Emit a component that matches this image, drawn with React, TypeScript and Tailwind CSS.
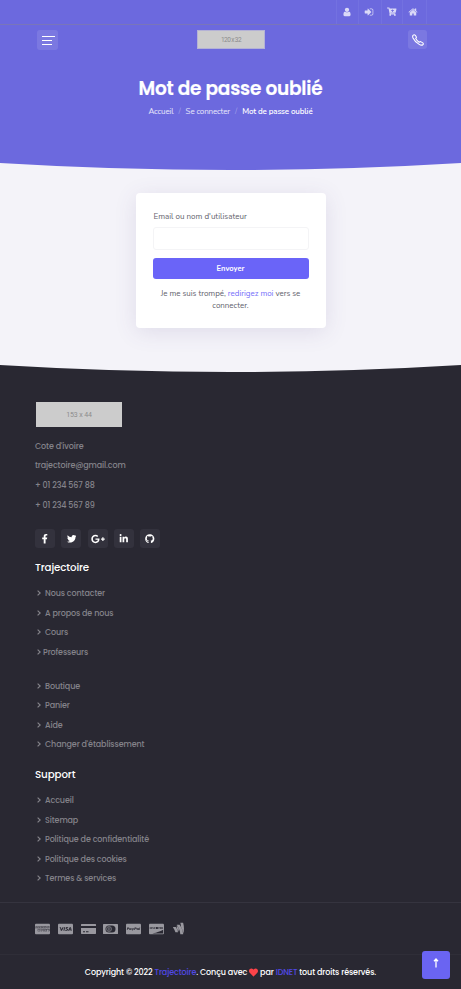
import React from "react";
import {
  FaCartPlus, FaFacebookF, FaTwitter, FaLinkedinIn, FaGithub,
  FaCcAmex, FaCcVisa, FaCcPaypal, FaCcDiscover, FaGoogleWallet, FaHeart, FaGooglePlusG,
} from "react-icons/fa";

const display = "font-['Poppins','Inter',sans-serif]";
const body = "font-['Nunito','Open_Sans',sans-serif]";

function Glyph({ d }: { d: string }) {
  return (
    <svg viewBox="0 0 1792 1792" className="h-[10px] w-[10px]" fill="currentColor">
      <path d={d} />
    </svg>
  );
}

const USER =
  "M1536 1399q0 109-62.5 187t-150.5 78h-854q-88 0-150.5-78t-62.5-187q0-85 8.5-160.5t31.5-152 58.5-131 94-89 134.5-34.5q131 128 313 128t313-128q76 0 134.5 34.5t94 89 58.5 131 31.5 152 8.5 160.5zm-256-887q0 159-112.5 271.5t-271.5 112.5-271.5-112.5-112.5-271.5 112.5-271.5 271.5-112.5 271.5 112.5 112.5 271.5z";
const SIGN_IN =
  "M1312 896q0 26-19 45l-544 544q-19 19-45 19t-45-19-19-45v-288h-448q-26 0-45-19t-19-45v-384q0-26 19-45t45-19h448v-288q0-26 19-45t45-19 45 19l544 544q19 19 19 45zm352-352v704q0 119-84.5 203.5t-203.5 84.5h-320q-32 0-32-32v-64q0-32 32-32h320q66 0 113-47t47-113v-704q0-66-47-113t-113-47h-320q-32 0-32-32v-64q0-32 32-32h320q119 0 203.5 84.5t84.5 203.5z";
const HOME =
  "M1472 992v480q0 26-19 45t-45 19h-384v-384h-256v384h-384q-26 0-45-19t-19-45v-480q0-1 .5-3t.5-3l575-474 575 474q1 2 1 6zm223-69l-62 74q-8 9-21 11h-3q-13 0-21-7l-692-577-692 577q-12 8-24 7-13-2-21-11l-62-74q-8-10-7-23.5t11-21.5l719-599q32-26 76-26t76 26l244 204v-195q0-14 9-23t23-9h192q14 0 23 9t9 23v408l219 182q10 8 11 21.5t-7 23.5z";

function TopBar() {
  const cell = "flex h-full items-center justify-center border-r border-white/5";
  return (
    <div className="flex h-6 justify-end pr-[34px] text-white/75">
      <a className={`${cell} w-[23px] border-l pr-[2px]`}><Glyph d={USER} /></a>
      <a className={`${cell} w-[23px] pr-[2px]`}><Glyph d={SIGN_IN} /></a>
      <a className={`${cell} w-[21px]`}><FaCartPlus className="text-[9.5px]" /></a>
      <a className={`${cell} w-[24px] pr-[3px]`}><Glyph d={HOME} /></a>
    </div>
  );
}

function NavBar() {
  return (
    <div className="flex h-[30px] items-start justify-between border-t border-[#7975b9] pl-[37px] pr-[34px] pt-[5px]">
      <button className="flex h-5 w-[21px] flex-col justify-center gap-[3px] rounded-[3px] bg-white/10 pl-[5px]">
        <span className="h-px w-[13px] bg-white" />
        <span className="h-px w-[10px] bg-white" />
        <span className="h-px w-[10px] bg-white" />
      </button>
      <div className="mr-1 flex h-[19px] w-[68px] items-center justify-center border border-[#b4b2d6] bg-[#cccccc] pt-[2px] font-['Roboto',sans-serif] text-[6.5px] tracking-[-0.6px] text-[#8c8c8c]">
        120 x 32
      </div>
      <button className="flex h-[19px] w-[19px] items-center justify-center rounded-[3px] bg-white/10">
        <svg viewBox="0 0 12 12" className="h-3 w-3" fill="none" stroke="white" strokeWidth="1.1" strokeLinejoin="round">
          <path d="M1 1.300Q2.300.2 3.300 1.300L4.500 3.200 3.700 4.500Q5 6.800 7.200 8.300L8.600 7.600 10.800 8.900Q11.900 9.900 10.700 10.900 9.200 11.600 7.200 10.400 3 8 1 4Q.3 2.300 1 1.300Z" />
        </svg>
      </button>
    </div>
  );
}

function Hero() {
  return (
    <header className="h-[163px] bg-[#6c69de]">
      <TopBar />
      <NavBar />
      <h1 className={`${display} pt-[23px] text-center text-[18.5px] font-semibold leading-6 tracking-[-0.2px] text-white [-webkit-text-stroke:0.2px_white]`}>
        Mot de passe oublié
      </h1>
      <nav className={`${body} mt-[5px] flex justify-center gap-[5px] text-[8px] leading-3 tracking-[-0.15px] text-white/85`}>
        <span>Accueil</span>
        <span className="text-white/40">/</span>
        <span>Se connecter</span>
        <span className="text-white/40">/</span>
        <span className="font-semibold text-white">Mot de passe oublié</span>
      </nav>
    </header>
  );
}

function Curve({ fill }: { fill: string }) {
  return (
    <svg className="block h-[7px] w-full" viewBox="0 0 461 7" preserveAspectRatio="none">
      <path d="M0 0Q230.5 14 461 0Z" fill={fill} />
    </svg>
  );
}

function LoginCard() {
  return (
    <form className={`${body} mx-auto mt-[23px] h-[135px] w-[190px] rounded-[4px] bg-white px-[17px] pt-[18px] text-[8px] text-[#625f6c] shadow-[0_4px_22px_rgba(82,72,130,0.13)]`}>
      <label className="block h-[16px] pl-px leading-3">Email ou nom d'utilisateur</label>
      <input className="block h-[23px] w-full rounded-[3px] border border-[#f4f4f6] bg-white" />
      <button type="button" className="mt-[8px] block h-[21px] w-full rounded-[3px] bg-[#6a64f8] text-[7.5px] font-bold text-white">
        Envoyer
      </button>
      <p className="mt-[9px] text-center leading-3 tracking-[-0.04px]">
        Je me suis trompé, <a className="text-[#766ffa]">redirigez moi</a> vers se<br />connecter.
      </p>
    </form>
  );
}

function Chevron() {
  return (
    <svg viewBox="0 0 4 6" className="mb-[2px] h-[6px] w-1 shrink-0" fill="none" stroke="currentColor" strokeWidth="1.2">
      <path d="M.6.6 3.2 3 .6 5.4" />
    </svg>
  );
}

function Row({ label, tight = false }: { label: string; tight?: boolean }) {
  return (
    <li className={`flex h-[19.6px] items-center pl-[2px] ${tight ? "gap-[2px]" : "gap-[4px]"}`}>
      <Chevron />
      <span>{label}</span>
    </li>
  );
}

function CreditCard() {
  return (
    <svg viewBox="0 0 15 10" className="h-[10px] w-[15px]" fill="currentColor">
      <path d="M.5 0h14l.5.5V2H0V.5ZM0 4h15v5.500l-.5.500H.5L0 9.500ZM2 7.200v1h2v-1Zm3 0v1h2.500v-1Z" fillRule="evenodd" />
    </svg>
  );
}

function DinersCard() {
  return (
    <svg viewBox="0 0 15 10" className="h-[10px] w-[15px]">
      <rect width="15" height="10" rx=".6" fill="currentColor" />
      <rect x="2.500" y="1.500" width="10" height="7" rx="3.500" fill="#292832" />
      <circle cx="6" cy="5" r="2.500" fill="none" stroke="currentColor" strokeWidth=".6" />
      <path d="M5.300 3.300v3.400M6.800 3.300v3.400" stroke="currentColor" strokeWidth=".6" />
    </svg>
  );
}

function Footer() {
  const social = "flex h-[19px] w-5 items-center justify-center rounded-[3px] bg-[#33323d]";
  return (
    <footer className={`${display} h-[624px] bg-[#292832] text-[8px] font-medium tracking-[-0.12px] text-[#84838a]`}>
      <Curve fill="#f4f3f9" />
      <div className="h-[530px] px-[35px] pt-[30px]">
        <div className="ml-px flex h-[25px] w-[86px] items-center justify-center bg-[#cccccc] pt-[2px] font-['Roboto',sans-serif] text-[7px] font-normal tracking-[-0.15px] text-[#8c8c8c]">
          153 x 44
        </div>
        <div className="mt-[9.8px] leading-[19.6px]">
          <p>Cote d'ivoire</p>
          <p>trajectoire@gmail.com</p>
          <p>+ 01 234 567 88</p>
          <p>+ 01 234 567 89</p>
        </div>
        <div className="mt-[14.2px] flex gap-[6.3px] text-[9.5px] text-white">
          <a className={social}><FaFacebookF /></a>
          <a className={social}><FaTwitter /></a>
          <a className={social}><FaGooglePlusG className="text-[14px]" /></a>
          <a className={social}><FaLinkedinIn /></a>
          <a className={social}><FaGithub /></a>
        </div>
        <h2 className="mt-[12px] text-[10.3px] leading-4 text-white">Trajectoire</h2>
        <ul className="mt-[8px]">
          <Row label="Nous contacter" />
          <Row label="A propos de nous" />
          <Row label="Cours" />
          <Row label="Professeurs" tight />
        </ul>
        <ul className="mt-[14px]">
          <Row label="Boutique" />
          <Row label="Panier" />
          <Row label="Aide" />
          <Row label="Changer d'établissement" />
        </ul>
        <h2 className="mt-[12px] text-[10.3px] leading-4 text-white">Support</h2>
        <ul className="mt-[8px]">
          <Row label="Accueil" />
          <Row label="Sitemap" />
          <Row label="Politique de confidentialité" />
          <Row label="Politique des cookies" />
          <Row label="Termes & services" />
        </ul>
      </div>
      <div className="flex h-[52px] items-center gap-[7.8px] border-t border-[#35343f] pl-[35px] text-[15px] text-[#99989f]">
        <FaCcAmex className="h-[12px]" preserveAspectRatio="none" />
        <FaCcVisa className="h-[12px]" preserveAspectRatio="none" />
        <CreditCard />
        <DinersCard />
        <FaCcPaypal className="h-[12px]" preserveAspectRatio="none" />
        <FaCcDiscover className="h-[12px]" preserveAspectRatio="none" />
        <FaGoogleWallet className="text-[13px]" />
      </div>
      <div className="flex h-[35px] items-center justify-center whitespace-pre border-t border-[#2f2e38] pt-px text-white">
        Copyright © 2022 <a className="text-[#5148e5]">Trajectoire</a>. Conçu avec <FaHeart className="text-[9px] text-[#fc4349]" /><span className="pl-[2px]">par </span><a className="text-[#5148e5]">IDNET</a> tout droits réservés.
      </div>
    </footer>
  );
}

export default function App() {
  return (
    <div className="w-full">
      <Hero />
      <main className="h-[202px] bg-[#f4f3f9]">
        <Curve fill="#6c69de" />
        <LoginCard />
      </main>
      <Footer />
      <a className="fixed bottom-[10px] right-[11px] flex h-7 w-7 items-center justify-center rounded-[3px] bg-[#6a64f2]">
        <svg viewBox="0 0 6 10" className="mb-[4px] h-[10px] w-[6px]" fill="none" stroke="white" strokeWidth="1.300">
          <path d="M3 9.500V1M1 3.300 3 1 5 3.300" />
        </svg>
      </a>
    </div>
  );
}
